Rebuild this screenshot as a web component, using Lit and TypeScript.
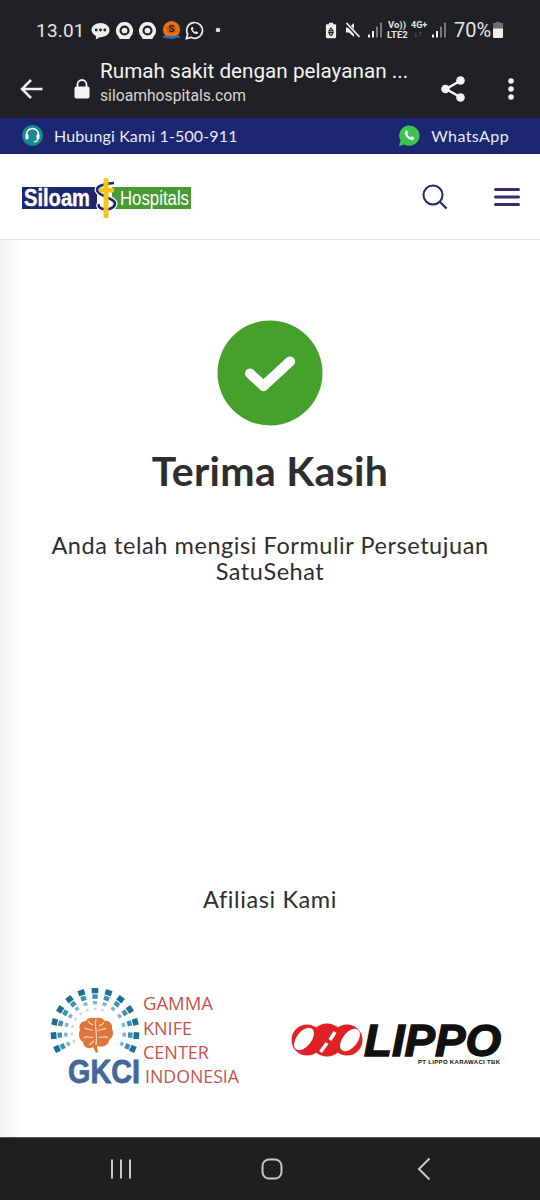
import { LitElement, html, css, svg } from 'lit';
import { customElement } from 'lit/decorators.js';

// radial squares round the brain in the GKCI logo
const rays = () => {
  const out = [];
  const cx = 95;
  const cy = 44;
  const colors = ['#1d6f96', '#3d90b3', '#7db8cf', '#bcdbe6'];
  for (let k = -6; k <= 6; k++) {
    const a = -90 + k * 19;
    const count = k >= 2 ? 3 : 4;
    for (let i = 0; i < count; i++) {
      const r = 41 - i * 6;
      const size = 6.6 - i * 1.3;
      const x = cx + Math.cos((a * Math.PI) / 180) * r;
      const y = cy + Math.sin((a * Math.PI) / 180) * r;
      out.push(svg`<rect x=${x - size / 2} y=${y - size / 2} width=${size} height=${size * 0.85} fill=${colors[i]} transform="rotate(${a + 90} ${x} ${y})"></rect>`);
    }
  }
  return out;
};

const signal = () => html`<svg width="14" height="16" viewBox="0 0 14 16"><rect x="0" y="12.500" width="2" height="3" fill="#efefef"/><rect x="4" y="9" width="2" height="6.500" fill="#efefef"/><rect x="8" y="4.500" width="2" height="11" fill="#777"/><rect x="12" y="0.500" width="2" height="15" fill="#777"/></svg>`;

const ringIcon = () => html`<svg width="19" height="19" viewBox="0 0 20 20"><path d="M10 1a9 9 0 0 1 6.500 15.200L15 19H5l-1.500-2.800A9 9 0 0 1 10 1z" fill="#efefef"/><circle cx="10" cy="10" r="5.300" fill="#1f2125"/><circle cx="10" cy="10" r="3" fill="#efefef"/></svg>`;

@customElement('app-root')
export class AppRoot extends LitElement {
  static styles = css`
    :host {
      display: block;
      width: 540px;
      height: 1200px;
      font-family: 'Lato', 'Noto Sans', sans-serif;
      overflow: hidden;
    }
    .page {
      display: flex;
      flex-direction: column;
      height: 1200px;
      background: #fff;
    }
    .chrome {
      background: #1f2125;
      color: #f1f1f1;
      height: 118px;
      font-family: 'Roboto', sans-serif;
      flex: none;
    }
    .status {
      height: 60px;
      display: flex;
      align-items: center;
      padding: 0 37px 0 36px;
      justify-content: space-between;
    }
    .status-left, .status-right {
      display: flex;
      align-items: center;
    }
    .time {
      font-size: 19px;
      color: #e4e4e4;
      width: 55px;
      letter-spacing: 0.2px;
    }
    .status-left svg {
      display: block;
      margin-right: 4.500px;
    }
    .status-right svg {
      display: block;
    }
    .pct {
      font-size: 20px;
      color: #e4e4e4;
      margin-left: 8px;
      width: 36px;
      white-space: nowrap;
    }
    .net {
      font-weight: 700;
      text-align: center;
      color: #e4e4e4;
      white-space: nowrap;
    }
    .vo {
      width: 20px;
      margin-left: 5px;
      font-size: 9.500px;
      line-height: 10.500px;
    }
    .fourg {
      width: 14px;
      margin-left: 4px;
      font-size: 9px;
      line-height: 9px;
    }
    .fourg span {
      color: #777;
    }
    .urlbar {
      height: 58px;
      display: flex;
      align-items: center;
    }
    .back {
      margin-left: 20px;
      width: 24px;
      flex: none;
    }
    .lock {
      margin-left: 30px;
      flex: none;
    }
    .url {
      margin-left: 10px;
      flex: 1;
      padding-bottom: 14.500px;
    }
    .url .title {
      font-size: 20.700px;
      line-height: 24px;
      color: #f3f3f3;
      white-space: nowrap;
    }
    .url .host {
      font-size: 15.700px;
      line-height: 19px;
      margin-top: 3.500px;
      color: #d6d6d6;
    }
    .share {
      margin-right: 42px;
      flex: none;
    }
    .more {
      margin-right: 26px;
      flex: none;
    }
    .topbar {
      background: #1c2671;
      height: 36px;
      box-sizing: border-box;
      display: flex;
      align-items: center;
      justify-content: space-between;
      color: #e9ebf6;
      font-size: 16px;
      flex: none;
      padding: 0 31px 2px 22px;
    }
    .phone {
      letter-spacing: 0.14px;
    }
    .wa {
      letter-spacing: 0.4px;
    }
    .topitem {
      display: flex;
      align-items: center;
      gap: 11px;
    }
    .header {
      height: 86px;
      flex: none;
      box-sizing: border-box;
      border-bottom: 1px solid #e4e4e4;
      display: flex;
      align-items: center;
      padding: 0 20px 0 22px;
    }
    .logo {
      flex: 1;
    }
    .logo svg, .header svg {
      display: block;
    }
    .search {
      margin-right: 46px;
    }
    .main {
      flex: 1;
      position: relative;
      display: flex;
      flex-direction: column;
      align-items: center;
      padding-top: 80px;
      color: #2e2e2e;
    }
    .edge {
      position: absolute;
      left: 0;
      top: 0;
      bottom: 0;
      width: 22px;
      background: linear-gradient(to right, #f3f3f3, #ffffff);
    }
    .check {
      display: block;
      position: relative;
    }
    h1 {
      margin: 21px 0 0;
      font-size: 41px;
      line-height: 48px;
      font-weight: 700;
      letter-spacing: 0.3px;
      position: relative;
    }
    .msg {
      margin: 37px 0 0;
      width: 450px;
      text-align: center;
      font-size: 23.500px;
      line-height: 26px;
      letter-spacing: 0.56px;
      position: relative;
    }
    .aff {
      margin-top: 300px;
      font-size: 23.500px;
      line-height: 30px;
      letter-spacing: 0.6px;
      position: relative;
    }
    .logos {
      position: relative;
      width: 100%;
      display: flex;
      align-items: flex-start;
      margin-top: 74px;
    }
    .logos svg {
      display: block;
      flex: none;
    }
    .nav {
      height: 63px;
      flex: none;
      box-sizing: border-box;
      background: #1f1f1f;
      border-top: 1px solid #555;
      display: flex;
      align-items: center;
    }
    .nav svg {
      display: block;
      flex: none;
    }
    .recents {
      margin-left: 110px;
    }
    .home {
      margin-left: 129px;
    }
    .nav-back {
      margin-left: 134px;
    }
  `;

  render() {
    return html`
      <div class="page">
        <div class="chrome">
          <div class="status">
            <div class="status-left">
              <span class="time">13.01</span>
              <svg width="19" height="19" viewBox="0 0 20 20"><path d="M10 2c5 0 9.500 3 9.500 7.500S15 17 10 17l-1 0-4 2.500 .5-3.500C2.800 14.600 .5 12.200 .5 9.500.5 5 5 2 10 2z" fill="#efefef"/><circle cx="5.500" cy="9.500" r="1.500" fill="#1f2125"/><circle cx="10" cy="9.500" r="1.500" fill="#1f2125"/><circle cx="14.500" cy="9.500" r="1.500" fill="#1f2125"/></svg>
              ${ringIcon()}
              ${ringIcon()}
              <svg width="19" height="19" viewBox="0 0 20 20"><circle cx="10" cy="9" r="9" fill="#e8701a"/><circle cx="10" cy="8.500" r="5" fill="#d2600f"/><text x="10" y="12" font-size="10" font-family="Roboto, sans-serif" font-weight="700" fill="#2b1a0a" text-anchor="middle">S</text><path d="M1 16c3-2 5 0 9 0s6-2 9 0v2c-3-1-5 1-9 1s-6-2-9-1z" fill="#2a6db5"/></svg>
              <svg width="19" height="19" viewBox="0 0 20 20"><path d="M1.500 18.500l1.300-4.700A8.300 8.300 0 1 1 6.200 17.200z" fill="none" stroke="#efefef" stroke-width="1.800"/><path d="M7.300 6.200c-.9.500-1.300 1.600-.8 3 .7 1.900 2.400 3.600 4.300 4.300 1.400.5 2.500.1 3-.8l-.3-1.200-1.900-.8-.9 1c-1.200-.5-2.200-1.500-2.700-2.700l1-.9-.8-1.900z" fill="#efefef"/></svg>
              <svg width="14" height="8" viewBox="0 0 14 8" style="margin-left:5px"><circle cx="4" cy="4" r="2.300" fill="#dcdcdc"/></svg>
            </div>
            <div class="status-right">
              <svg width="12" height="17" viewBox="0 0 14 20"><path d="M4.500 1h5v1.500h2A1.500 1.500 0 0 1 13 4v13.500a1.500 1.500 0 0 1-1.500 1.500h-9A1.500 1.500 0 0 1 1 17.500V4a1.500 1.500 0 0 1 1.500-1.500h2z" fill="#efefef"/><path d="M7 7l2.500 3.500h-5zM4.500 12.500h5L8 15.500H6z" fill="none" stroke="#1f2125" stroke-width="1.300"/></svg>
              <svg width="15" height="16" viewBox="0 0 15 16" style="margin-left:8px"><path d="M1 5.500h3L9 1v14l-5-4.500H1z" fill="#efefef"/><path d="M1 1l13 14" stroke="#1f2125" stroke-width="3.500"/><path d="M1.500 1l13 14" stroke="#efefef" stroke-width="1.800"/></svg>
              <div style="margin-left:8px">${signal()}</div>
              <div class="net vo">Vo))<br />LTE2</div>
              <div class="net fourg">4G+<br /><span>↓↑</span></div>
              <div style="margin-left:7px">${signal()}</div>
              <span class="pct">70%</span>
              <svg width="10" height="16" viewBox="0 0 10 16" style="margin-left:3px"><path d="M3 0h4v1.500h2a1 1 0 0 1 1 1V15a1 1 0 0 1-1 1H1a1 1 0 0 1-1-1V2.500a1 1 0 0 1 1-1h2z" fill="#efefef"/><path d="M0 6.500v-4a1 1 0 0 1 1-1h2V0h4v1.500h2a1 1 0 0 1 1 1v4z" fill="#6d6d6d"/></svg>
            </div>
          </div>
          <div class="urlbar">
            <svg class="back" height="24" viewBox="0 0 24 24"><path d="M22.500 12H2.500M11 3l-9 9 9 9" fill="none" stroke="#f3f3f3" stroke-width="2.500"/></svg>
            <svg class="lock" width="16" height="20" viewBox="0 0 16 20"><path d="M3.500 8V5.500a4.500 4.500 0 0 1 9 0V8" fill="none" stroke="#f3f3f3" stroke-width="1.800"/><rect x="0.500" y="7.500" width="15" height="12" rx="1.800" fill="#f3f3f3"/></svg>
            <div class="url">
              <div class="title">Rumah sakit dengan pelayanan ...</div>
              <div class="host">siloamhospitals.com</div>
            </div>
            <svg class="share" width="26" height="28" viewBox="0 0 26 28"><path d="M20 6L6 14l14 8" fill="none" stroke="#f3f3f3" stroke-width="2.500"/><circle cx="20.500" cy="5.500" r="4.300" fill="#f3f3f3"/><circle cx="5.500" cy="14" r="4.300" fill="#f3f3f3"/><circle cx="20.500" cy="22.500" r="4.300" fill="#f3f3f3"/></svg>
            <svg class="more" width="6" height="22" viewBox="0 0 6 22"><circle cx="3" cy="3" r="2.800" fill="#f3f3f3"/><circle cx="3" cy="11" r="2.800" fill="#f3f3f3"/><circle cx="3" cy="19" r="2.800" fill="#f3f3f3"/></svg>
          </div>
        </div>

        <div class="topbar">
          <div class="topitem">
            <svg width="21" height="21" viewBox="0 0 21 21"><circle cx="10.500" cy="10.500" r="10.500" fill="#178b90"/><path d="M4.500 11V9.500a6 6 0 0 1 12 0V11" fill="none" stroke="#fff" stroke-width="1.500"/><rect x="3.500" y="9" width="3" height="5.500" rx="1.400" fill="#fff"/><rect x="14.500" y="9" width="3" height="5.500" rx="1.400" fill="#fff"/><path d="M15.500 14c0 2-1.500 3-4 3" fill="none" stroke="#fff" stroke-width="1.200"/></svg>
            <span class="phone">Hubungi Kami 1-500-911</span>
          </div>
          <div class="topitem">
            <svg width="21" height="21" viewBox="0 0 21 21"><path d="M0 21l1.500-5.300A10.200 10.200 0 1 1 5.300 19.500z" fill="#3fc350"/><path d="M7 5.500c-1.200.7-1.700 2-1 3.800.9 2.400 2.900 4.500 5.400 5.400 1.700.6 3.100.2 3.800-1l-.3-1.500-2.300-1-1.100 1.200c-1.500-.7-2.600-1.800-3.300-3.300l1.200-1.100-1-2.300z" fill="#fff"/></svg>
            <span class="wa">WhatsApp</span>
          </div>
        </div>

        <div class="header">
          <div class="logo">
            <svg width="200" height="44" viewBox="0 0 200 44">
              <rect x="0" y="12" width="75" height="22" fill="#1c2671"/>
              <rect x="90" y="12" width="79" height="22" fill="#4a9a33"/>
              <text x="2" y="30.500" font-family="'Liberation Sans', sans-serif" font-weight="700" font-size="23" fill="#fff" stroke="#fff" stroke-width="0.400" textLength="66" lengthAdjust="spacingAndGlyphs">Siloam</text>
              <text x="98" y="30" font-family="'Liberation Sans', sans-serif" font-size="21" fill="#fff" textLength="69" lengthAdjust="spacingAndGlyphs">Hospitals</text>
              <path d="M92 8C80 9 72 12 76 17c4 5 18 7 17 12s-8 6-12 5c-4-1-5-3-4-5" fill="none" stroke="#fff" stroke-width="5"/>
              <path d="M92 8C80 9 72 12 76 17c4 5 18 7 17 12s-8 6-12 5c-4-1-5-3-4-5" fill="none" stroke="#1c2671" stroke-width="2.600"/>
              <rect x="81.500" y="3" width="5" height="40" rx="1.500" fill="#f5c518"/>
              <rect x="77" y="13" width="15" height="4.500" rx="1" fill="#f5c518"/>
            </svg>
          </div>
          <svg class="search" width="26" height="26" viewBox="0 0 26 26"><circle cx="11" cy="11" r="9.500" fill="none" stroke="#1c2671" stroke-width="2"/><path d="M17.800 17.800l6.700 6.700" stroke="#1c2671" stroke-width="2.200"/></svg>
          <svg width="26" height="20" viewBox="0 0 26 20"><rect x="0" y="1" width="26" height="3" rx="1.500" fill="#3c2a6b"/><rect x="0" y="8.500" width="26" height="3" rx="1.500" fill="#3c2a6b"/><rect x="0" y="16" width="26" height="3" rx="1.500" fill="#3c2a6b"/></svg>
        </div>

        <div class="main">
          <div class="edge"></div>
          <svg class="check" width="106" height="106" viewBox="0 0 106 106">
            <circle cx="53" cy="53" r="52.500" fill="#46a12c"/>
            <path d="M33 53.500L46.500 66 73 41.500" fill="none" stroke="#fff" stroke-width="10" stroke-linecap="round" stroke-linejoin="round"/>
          </svg>
          <h1>Terima Kasih</h1>
          <p class="msg">Anda telah mengisi Formulir Persetujuan SatuSehat</p>
          <div class="aff">Afiliasi Kami</div>
          <div class="logos">
            <svg width="280" height="104" viewBox="0 0 280 104">
              ${rays()}
              <path d="M96 30c-5-1-9 0-10 3-5 0-8 4-6 9-2 4-1 10 3 12 0 5 6 8 10 5l3 6 2-1-1-6c6 2 12-1 12-6 4-2 5-8 3-11 1-5-3-9-7-8-2-3-5-4-9-3z" fill="#e0773a"/>
              <path d="M96 31c-2 8 2 14 0 26M85 40c3 3 6 0 8 3M84 50c4-3 7 1 9-1M88 33c1 3 3 3 5 4M106 40c-3 3-6 0-8 3M108 50c-4-3-7 1-9-1M104 34c-1 3-3 3-5 4M90 57c1-3 3-3 4-4" fill="none" stroke="#f8d7bf" stroke-width="1.200"/>
              <text x="68" y="95" font-family="'Liberation Sans', sans-serif" font-weight="700" font-size="34" fill="#44679b" stroke="#44679b" stroke-width="0.800" textLength="72" lengthAdjust="spacingAndGlyphs">GKCI</text>
              <g font-family="'Open Sans', sans-serif" font-size="19" fill="#c9524c">
                <text x="143" y="22" textLength="70" lengthAdjust="spacingAndGlyphs">GAMMA</text>
                <text x="143" y="47" textLength="49" lengthAdjust="spacingAndGlyphs">KNIFE</text>
                <text x="143" y="71" textLength="66" lengthAdjust="spacingAndGlyphs">CENTER</text>
                <text x="145" y="95" textLength="94" lengthAdjust="spacingAndGlyphs">INDONESIA</text>
              </g>
            </svg>
            <svg width="260" height="104" viewBox="280 0 260 104">
              <circle cx="307" cy="52" r="15.500" fill="#e02226"/>
              <circle cx="327" cy="52" r="16.500" fill="#e02226"/>
              <circle cx="347" cy="52" r="15.500" fill="#e02226"/>
              <ellipse cx="304" cy="51" rx="13" ry="7.500" transform="rotate(-52 304 51)" fill="#fff"/>
              <ellipse cx="350" cy="52" rx="13" ry="7.500" transform="rotate(-52 350 52)" fill="#fff"/>
              <path d="M335 44l-5 8M327 55l-6.500 9" stroke="#fff" stroke-width="3.500"/>
              <text x="364" y="68" font-family="'Liberation Sans', sans-serif" font-weight="700" font-style="italic" font-size="44" fill="#111" stroke="#111" stroke-width="1.400" textLength="137" lengthAdjust="spacingAndGlyphs">LIPPO</text>
              <text x="418" y="75.500" font-family="'Liberation Sans', sans-serif" font-weight="700" font-size="6" fill="#111" textLength="82">PT LIPPO KARAWACI TBK</text>
            </svg>
          </div>
        </div>

        <div class="nav">
          <svg class="recents" width="22" height="22" viewBox="0 0 22 22"><path d="M2 1.500v19M11 1.500v19M20 1.500v19" stroke="#c8c8c8" stroke-width="2"/></svg>
          <svg class="home" width="22" height="22" viewBox="0 0 22 22"><rect x="1.500" y="1.500" width="19" height="19" rx="6.500" fill="none" stroke="#c8c8c8" stroke-width="2"/></svg>
          <svg class="nav-back" width="14" height="24" viewBox="0 0 14 24"><path d="M12.500 1.500L2 12l10.500 10.500" fill="none" stroke="#c8c8c8" stroke-width="2"/></svg>
        </div>
      </div>
    `;
  }
}
